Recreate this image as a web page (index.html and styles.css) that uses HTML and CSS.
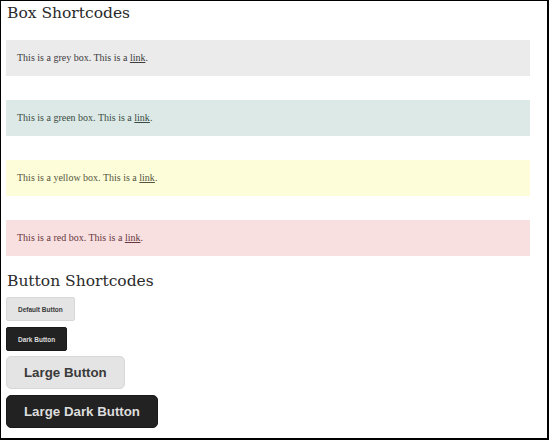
FILE: index.html
```html
<!DOCTYPE html>
<html>
<head>
<meta charset="utf-8">
<link rel="stylesheet" href="styles.css">
</head>
<body>
<div class="frame">
  <h2 class="title">Box Shortcodes</h2>
  <div class="boxes">
    <div class="box box-grey">This is a grey box. This is a <a href="#">link</a>.</div>
    <div class="box box-green">This is a green box. This is a <a href="#">link</a>.</div>
    <div class="box box-yellow">This is a yellow box. This is a <a href="#">link</a>.</div>
    <div class="box box-red">This is a red box. This is a <a href="#">link</a>.</div>
  </div>
  <h2 class="title title-buttons">Button Shortcodes</h2>
  <div class="buttons">
    <a class="btn" href="#">Default Button</a>
    <a class="btn btn-dark" href="#">Dark Button</a>
    <a class="btn btn-large" href="#">Large Button</a>
    <a class="btn btn-large btn-dark" href="#">Large Dark Button</a>
  </div>
</div>
</body>
</html>
```
FILE: styles.css
```css
html, body {
  margin: 0;
  padding: 0;
  background: #fff;
}
.frame {
  box-sizing: border-box;
  width: 549px;
  height: 440px;
  border-left: 1px solid #000;
  border-top: 1px solid #000;
  border-right: 2px solid #000;
  border-bottom: 2px solid #000;
  padding: 0 0 0 5px;
  display: flex;
  flex-direction: column;
  align-items: flex-start;
}
.title {
  margin: 3px 0 0 1px;
  font-family: "DejaVu Serif", serif;
  font-weight: normal;
  font-size: 15.5px;
  line-height: 18px;
  color: #2a2a2a;
}
.boxes {
  margin-top: 18px;
  display: flex;
  flex-direction: column;
  gap: 24px;
  align-self: stretch;
}
.box {
  width: 524px;
  height: 36px;
  box-sizing: border-box;
  padding: 0 11px;
  line-height: 36px;
  font-family: "Liberation Serif", serif;
  font-size: 10px;
}
.box a { color: inherit; }
.box-grey { background: #ebebeb; color: #3c3c3c; }
.box-green { background: #dde9e6; color: #3a4d44; }
.box-yellow { background: #fdfed9; color: #55553f; }
.box-red { background: #f9e0e0; color: #663840; }
.title-buttons {
  margin-top: 16px;
}
.buttons {
  margin-top: 7px;
  display: flex;
  flex-direction: column;
  align-items: flex-start;
  gap: 6px;
}
.btn {
  box-sizing: border-box;
  display: flex;
  align-items: center;
  justify-content: center;
  height: 24px;
  padding: 0 11px;
  font-family: "Liberation Sans", Arial, sans-serif;
  font-weight: bold;
  font-size: 6.5px;
  text-decoration: none;
  color: #3a3a3a;
  background: #e4e4e4;
  border: 1px solid #d8d8d8;
  border-radius: 2px;
}
.btn-dark {
  background: #222;
  border-color: #1a1a1a;
  color: #ddd;
}
.btn-large {
  height: 33px;
  padding: 0 17px;
  font-size: 13.3px;
  border-radius: 5px;
}
.btn-dark + .btn-large {
  margin-top: -1px;
}
```
